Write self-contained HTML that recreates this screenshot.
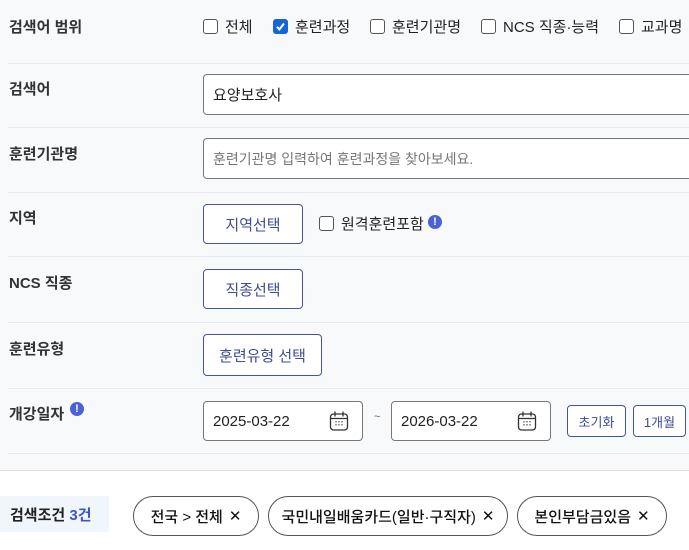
<!DOCTYPE html>
<html><head><meta charset="utf-8">
<style>
*{box-sizing:border-box;margin:0;padding:0}
body{width:689px;height:550px;overflow:hidden;background:#fff;font-family:"Liberation Sans","Noto Sans CJK KR",sans-serif;color:#222;position:relative}
.top{position:absolute;left:0;top:0;width:689px;height:471px;background:#f8f9fb;border-bottom:1px solid #dcdcdc}
.hr{position:absolute;left:8px;right:0;height:1px;background:#e9e9ec}
.lbl{position:absolute;left:9px;font-size:15px;font-weight:bold;color:#333}
.cb{position:absolute;width:15px;height:15px;border:1px solid #555;border-radius:3px;background:#fff}
.cb.on{background:#1565d8;border-color:#1565d8}
.t{position:absolute;font-size:15px;color:#222;white-space:nowrap}
.inp{position:absolute;background:#fff;border:1px solid #777;border-radius:4px;font-size:15px;padding-left:9px;display:flex;align-items:center}
.btn{position:absolute;background:#fff;border:1px solid #4254a5;border-radius:4px;color:#3e4b99;font-size:15px;display:flex;align-items:center;justify-content:center}
.info{position:absolute;width:14px;height:14px;border-radius:50%;background:#4a62d6;color:#fff;font-size:11px;font-weight:bold;text-align:center;line-height:14px}
.chip{position:absolute;top:496px;height:40px;border:1px solid #555;border-radius:20px;font-size:15px;font-weight:500;color:#111;display:flex;align-items:center;justify-content:center;background:#fff}
</style></head><body>
<div class="top"></div>
<div class="hr" style="top:63px"></div>
<div class="hr" style="top:127px"></div>
<div class="hr" style="top:192px"></div>
<div class="hr" style="top:256px"></div>
<div class="hr" style="top:322px"></div>
<div class="hr" style="top:388px"></div>
<div class="hr" style="top:453px"></div>

<div class="lbl" style="top:16px">검색어 범위</div>
<div class="cb" style="left:203px;top:19px"></div><div class="t" style="left:225px;top:16px">전체</div>
<div class="cb on" style="left:273px;top:19px"><svg width="13" height="13" viewBox="0 0 13 13" style="position:absolute;left:0;top:0"><path d="M3 6.8l2.4 2.6L10 3.5" stroke="#fff" stroke-width="2" fill="none"/></svg></div><div class="t" style="left:295px;top:16px">훈련과정</div>
<div class="cb" style="left:370px;top:19px"></div><div class="t" style="left:392px;top:16px">훈련기관명</div>
<div class="cb" style="left:481px;top:19px"></div><div class="t" style="left:503px;top:16px">NCS 직종·능력</div>
<div class="cb" style="left:619px;top:19px"></div><div class="t" style="left:641px;top:16px">교과명</div>

<div class="lbl" style="top:78px">검색어</div>
<div class="inp" style="left:203px;top:74px;width:500px;height:41px">요양보호사</div>

<div class="lbl" style="top:143px">훈련기관명</div>
<div class="inp" style="left:203px;top:138px;width:500px;height:41px;color:#777;font-size:14px">훈련기관명 입력하여 훈련과정을 찾아보세요.</div>

<div class="lbl" style="top:207px">지역</div>
<div class="btn" style="left:203px;top:204px;width:100px;height:40px">지역선택</div>
<div class="cb" style="left:319px;top:216px"></div><div class="t" style="left:341px;top:213px">원격훈련포함</div>
<div class="info" style="left:428px;top:215px">!</div>

<div class="lbl" style="top:272px">NCS 직종</div>
<div class="btn" style="left:203px;top:269px;width:100px;height:40px">직종선택</div>

<div class="lbl" style="top:338px">훈련유형</div>
<div class="btn" style="left:203px;top:334px;width:119px;height:42px">훈련유형 선택</div>

<div class="lbl" style="top:403px">개강일자</div>
<div class="info" style="left:70px;top:402px">!</div>
<div class="inp" style="left:203px;top:401px;width:160px;height:40px;padding-left:9px">2025-03-22</div>
<svg style="position:absolute;left:329px;top:410px" width="20" height="22" viewBox="0 0 20 22"><rect x="1.5" y="4" width="17" height="16" rx="3" fill="none" stroke="#333" stroke-width="1.3"/><path d="M1.5 8.5h17M6 1.5v5M14 1.5v5" stroke="#333" stroke-width="1.3"/><g fill="#999"><rect x="6" y="11" width="2" height="1.5"/><rect x="9" y="11" width="2" height="1.5"/><rect x="12" y="11" width="2" height="1.5"/><rect x="6" y="14" width="2" height="1.5"/><rect x="9" y="14" width="2" height="1.5"/><rect x="12" y="14" width="2" height="1.5"/></g></svg>
<div class="t" style="left:374px;top:411px;font-size:11px;color:#666">~</div>
<div class="inp" style="left:391px;top:401px;width:160px;height:40px">2026-03-22</div>
<svg style="position:absolute;left:517px;top:410px" width="20" height="22" viewBox="0 0 20 22"><rect x="1.5" y="4" width="17" height="16" rx="3" fill="none" stroke="#333" stroke-width="1.3"/><path d="M1.5 8.5h17M6 1.5v5M14 1.5v5" stroke="#333" stroke-width="1.3"/><g fill="#999"><rect x="6" y="11" width="2" height="1.5"/><rect x="9" y="11" width="2" height="1.5"/><rect x="12" y="11" width="2" height="1.5"/><rect x="6" y="14" width="2" height="1.5"/><rect x="9" y="14" width="2" height="1.5"/><rect x="12" y="14" width="2" height="1.5"/></g></svg>
<div class="btn" style="left:567px;top:405px;width:59px;height:32px;font-size:13px">초기화</div>
<div class="btn" style="left:633px;top:405px;width:53px;height:32px;font-size:13px">1개월</div>

<div style="position:absolute;left:0;top:496px;width:109px;height:36px;background:#f1f5fc;font-size:15px;font-weight:bold;display:flex;align-items:center;padding-left:10px">검색조건&nbsp;<span style="color:#3d56c4">3건</span></div>
<div class="chip" style="left:133px;width:126px">전국 &gt; 전체 <span style="font-weight:normal;margin-left:6px">✕</span></div>
<div class="chip" style="left:268px;width:240px">국민내일배움카드(일반·구직자) <span style="font-weight:normal;margin-left:6px">✕</span></div>
<div class="chip" style="left:517px;width:150px">본인부담금있음 <span style="font-weight:normal;margin-left:6px">✕</span></div>
</body></html>
